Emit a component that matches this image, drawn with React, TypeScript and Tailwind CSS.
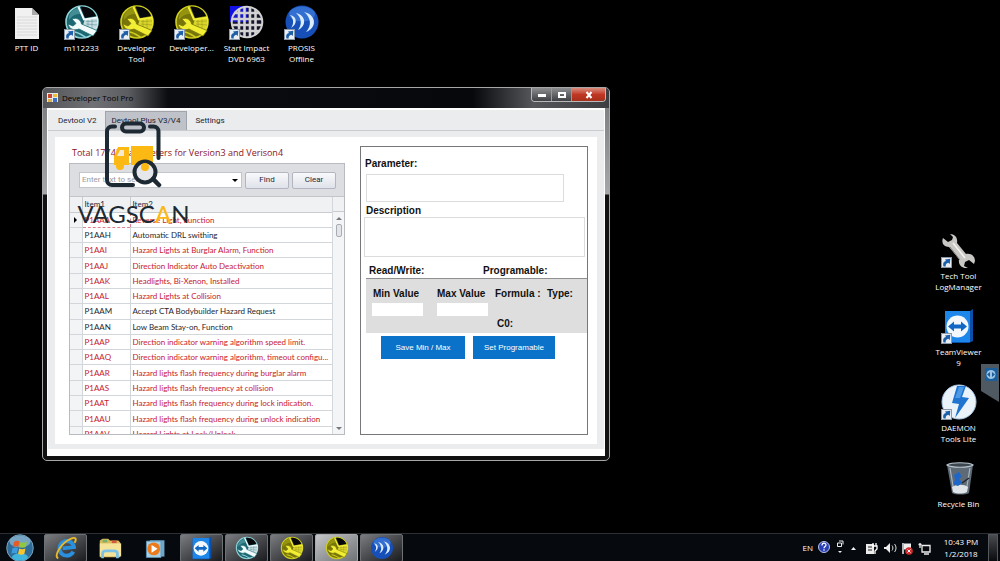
import React from "react";

type IconProps = { className?: string };

const parameters = [
  { code: "P1AAA", name: "Reverse Light, Function", changed: true },
  { code: "P1AAH", name: "Automatic DRL swithing", changed: false },
  { code: "P1AAI", name: "Hazard Lights at Burglar Alarm, Function", changed: true },
  { code: "P1AAJ", name: "Direction Indicator Auto Deactivation", changed: true },
  { code: "P1AAK", name: "Headlights, Bi-Xenon, Installed", changed: true },
  { code: "P1AAL", name: "Hazard Lights at Collision", changed: true },
  { code: "P1AAM", name: "Accept CTA Bodybuilder Hazard Request", changed: false },
  { code: "P1AAN", name: "Low Beam Stay-on, Function", changed: false },
  { code: "P1AAP", name: "Direction indicator warning algorithm speed limit.", changed: true },
  { code: "P1AAQ", name: "Direction indicator warning algorithm, timeout configu...", changed: true },
  { code: "P1AAR", name: "Hazard lights flash frequency during burglar alarm", changed: true },
  { code: "P1AAS", name: "Hazard lights flash frequency at collision", changed: true },
  { code: "P1AAT", name: "Hazard lights flash frequency during lock indication.", changed: true },
  { code: "P1AAU", name: "Hazard lights flash frequency during unlock indication", changed: true },
  { code: "P1AAV", name: "Hazard Lights at Lock/Unlock", changed: true },
];

/* ---------- icons ---------- */

const PaperIcon = ({ className }: IconProps) => (
  <svg viewBox="0 0 36 36" className={className} aria-hidden="true">
    <path d="M6 4h17l7 7v24H6z" fill="#f1f1f1" />
    <path d="M23 4v7h7z" fill="#a9a9a9" />
    <path d="M8 13h20M8 16h20M8 19h20M8 22h20M8 25h20M8 28h20M8 31h20" stroke="#d9d9d9" strokeWidth="1" />
  </svg>
);

const ToolDisc = ({ className, rim, face, dark }: IconProps & { rim: string; face: string; dark: string }) => (
  <svg viewBox="0 0 36 36" className={className} aria-hidden="true">
    <circle cx="18" cy="18" r="16" fill={dark} stroke={rim} strokeWidth="1.6" />
    <path d="M5 12C7 7 10 5 14 4l2 6C11 10 8 12 5 16z" fill={rim} opacity=".35" />
    <path d="M16.500 2.500C24 2 30 6 32 12l-11 2z" fill="#07080b" />
    <path d="M21 15l13-1c.5 6-.5 9-3 13l-12-6z" fill={face} opacity=".8" />
    <path d="M22 17.500l11-.5M22 20l11 1M24 15v8M28 15v9" stroke={dark} strokeWidth=".5" opacity=".7" />
    <path d="M14.500 3L20 15.500 33.500 13.500" fill="none" stroke={face} strokeWidth="2" />
    <path
      d="M8 15c5-2 9 1 9.500 5L33 26.500 29 32l-14-7c-5 2-10 0-11-5l5 2 3-2.500z"
      fill={face}
      stroke={dark}
      strokeWidth=".8"
    />
    <path d="M10 28c4 0 8 3 12 5.500" stroke={rim} strokeWidth="1.600" fill="none" />
  </svg>
);

const TealTool = ({ className }: IconProps) => (
  <ToolDisc className={className} rim="#8ed3d8" face="#f2fbfb" dark="#1c6772" />
);

const YellowTool = ({ className }: IconProps) => (
  <ToolDisc className={className} rim="#cfcf1e" face="#f2ee34" dark="#77750a" />
);

const GlobeGrid = ({ className }: IconProps) => (
  <svg viewBox="0 0 36 36" className={className} aria-hidden="true">
    <path d="M1 2h18v16H1z" fill="#1212e8" />
    <circle cx="18" cy="18" r="16" fill="#14142a" />
    <path d="M3 13A16 16 0 0 1 18 2v16H2z" fill="#1a1ac8" />
    <g stroke="#d2d2d2" strokeWidth="2.600" fill="none">
      <path d="M10 5v26M15.500 3v30M21 3v30M26.500 5v26M5 9h26M3 15h30M3 21h30M5 27h26" />
      <circle cx="18" cy="18" r="15.300" strokeWidth="2" />
    </g>
  </svg>
);

const Prosis = ({ className }: IconProps) => (
  <svg viewBox="0 0 36 36" className={className} aria-hidden="true">
    <circle cx="18" cy="18" r="16.500" fill="#174fb8" />
    <ellipse cx="18" cy="10" rx="13" ry="7.500" fill="#4b8be6" opacity=".55" />
    <g fill="#dcecff">
      <path d="M6 11c7 1 8 9 1 13 3-4 3-9-1-13z" />
      <path d="M12 9c10 2 11 13 2 17 4-5 4-12-2-17z" />
      <path d="M20 8c13 3 13 16 2 20 6-6 5-15-2-20z" />
    </g>
  </svg>
);

const WrenchIcon = ({ className }: IconProps) => (
  <svg viewBox="0 0 36 36" className={className} aria-hidden="true">
    <path
      d="M9 2c5 0 8 4 7 9l9 11c5-1 9 2 9 7l-1 3-5-4-4 2-1 4 4 2c-6 1-10-3-9-9L8 15c-5 0-8-4-6-9l5 4 4-2 1-3z"
      fill="#c9c7c4"
    />
    <path d="M12 11l12 15" stroke="#f4f2ef" strokeWidth="1.600" />
    <path d="M9 15l10 13" stroke="#85827e" strokeWidth="1" />
  </svg>
);

const TeamViewer = ({ className }: IconProps) => (
  <svg viewBox="0 0 36 36" className={className} aria-hidden="true">
    <path d="M4 3h25l3-2v32l-4 2H4z" fill="#0b4fa8" />
    <path d="M4 3h25v31H4z" fill="#1c86ea" />
    <circle cx="16.500" cy="18.500" r="11" fill="#f3f8fd" />
    <path d="M7 18.500l6-5v3h7v-3l6 5-6 5v-3h-7v3z" fill="#1268c3" />
  </svg>
);

const Daemon = ({ className }: IconProps) => (
  <svg viewBox="0 0 36 36" className={className} aria-hidden="true">
    <circle cx="18" cy="18" r="17" fill="#eaf2fa" stroke="#a9c9e8" strokeWidth="1" />
    <path d="M16 2h9l-4 11 7 1-14 20 4-14-7-1z" fill="#1f74d0" />
    <path d="M18 3h5l-4 11h-5z" fill="#4e9ae4" />
  </svg>
);

const RecycleBin = ({ className }: IconProps) => (
  <svg viewBox="0 0 36 36" className={className} aria-hidden="true">
    <path d="M6 5h26l-4 28c-3 2-14 2-17 0z" fill="#5e6b77" />
    <path d="M6 5c4-3 22-3 26 0-4 3-22 3-26 0z" fill="#3d4750" stroke="#bcc6ce" strokeWidth="1.200" />
    <path d="M9 8l4 24M29 8l-4 24" stroke="#a9b5c0" strokeWidth="1.200" />
    <path d="M11 27c5-3 12-3 16 0l-1 5c-4 2-10 2-14 0z" fill="#dfe4e8" />
    <path d="M13 15l5-3 3 5-3 1 3 5-4 3-5-2 2-4z" fill="#1f66c9" />
    <path d="M21 23l7-5" stroke="#20262c" strokeWidth="1.500" />
  </svg>
);

const ShortcutArrow = () => (
  <svg viewBox="0 0 11 11" className="absolute bottom-0 left-0 h-[11px] w-[11px]" aria-hidden="true">
    <rect x=".5" y=".5" width="10" height="10" fill="#e9eef4" stroke="#8c98a6" />
    <path d="M2.500 9.500C1.500 6 3 4.300 5 4L4 2.500 9.300 1.800 8.800 7 7.300 5.700C5.500 6 4.300 7.500 4.700 9.500z" fill="#1d5fa8" />
  </svg>
);

const StartOrb = () => (
  <svg viewBox="0 0 28 28" className="h-7 w-7" aria-hidden="true">
    <circle cx="14" cy="14" r="13.300" fill="#2f6c99" stroke="#8fb6cc" strokeWidth=".8" />
    <ellipse cx="14" cy="7.500" rx="10.500" ry="6" fill="#9cc3d8" opacity=".65" />
    <ellipse cx="14" cy="23" rx="8" ry="3.500" fill="#44c8ee" opacity=".8" />
    <path d="M8 8c2-1.500 4-1.500 5.500-.5L12.300 13c-2-1-3.500-1-5.500 0z" fill="#e65a28" />
    <path d="M14.500 8c2 1 4 1 6.500-.5l-1.200 5.500c-2 1-4 1-6.500 0z" fill="#8fc73e" />
    <path d="M6.500 14.300c2-1 3.500-1 5.500 0l-1.200 5.500c-2-1-3.500-1-5.500 0z" fill="#3d9be0" />
    <path d="M13.200 14.500c2 1 4 1 6.300 0l-1.200 5.500c-2 1-4 1-6.300 0z" fill="#f7c62f" />
  </svg>
);

const ExplorerE = ({ className }: IconProps) => (
  <svg viewBox="0 0 28 28" className={className} aria-hidden="true">
    <path
      d="M22 19a8.500 8.500 0 1 1 1.300-5H10"
      fill="none"
      stroke="#2a8fdd"
      strokeWidth="4.500"
      transform="rotate(-6 14 14)"
    />
    <path d="M5 26C-1 24 8 8 20 3c5-2 7 0 4 5" fill="none" stroke="#e8b92b" strokeWidth="2.200" />
  </svg>
);

const FolderIcon = ({ className }: IconProps) => (
  <svg viewBox="0 0 28 28" className={className} aria-hidden="true">
    <path d="M3 6l3-2h6l2 2h9l2 2v16H3z" fill="#d9bb5c" />
    <path d="M6 5h5v3H6z" fill="#7bb267" />
    <path d="M16 6h5v3h-5z" fill="#d8563d" />
    <path d="M3 9h23v14H3z" fill="#f5e39a" />
    <path d="M6 25v-5c0-2 2-3 4-3h8c2 0 4 1 4 3v5" fill="none" stroke="#7cc2e6" strokeWidth="3" />
  </svg>
);

const MediaIcon = ({ className }: IconProps) => (
  <svg viewBox="0 0 28 28" className={className} aria-hidden="true">
    <path d="M8 5h17v19H8z" fill="#6ea9cc" />
    <path d="M4 6h17v19H4z" fill="#a8cfe4" stroke="#5f97b8" />
    <circle cx="12.500" cy="15" r="7.500" fill="#ea7a1c" />
    <path d="M10 10.500l7 4.500-7 4.500z" fill="#fff" />
  </svg>
);

const FormIcon = () => (
  <svg viewBox="0 0 11 11" className="h-[11px] w-[11px]" aria-hidden="true">
    <path d="M0 1h11v9H0z" fill="#e8e8e8" />
    <path d="M1 2h4v4H1z" fill="#c9452c" />
    <path d="M6 2h4v3H6z" fill="#f0bd3a" />
    <path d="M1 7h4v3H1z" fill="#d9b04c" />
    <path d="M6 6h4v4H6z" fill="#3f6fc4" />
  </svg>
);

const ClipboardTruck = () => (
  <svg viewBox="104 120 60 68" className="h-[68px] w-[60px]" aria-hidden="true">
    <g fill="none" stroke="#1d2a33" strokeWidth="4" strokeLinecap="round">
      <path d="M115 126.500h-3a5 5 0 0 0-5 5V180a5 5 0 0 0 5 5h21" />
      <path d="M150 126.500h3.500a5 5 0 0 1 5 5V158" />
      <rect x="122" y="123.500" width="22" height="8" rx="4" />
    </g>
    <path d="M131 146h22v19h-22z" fill="#fcb813" />
    <path d="M129 165h-15v-9l4-9h11z" fill="#fcb813" />
    <path d="M117 156l3-6h4v6z" fill="#f5ead0" />
    <circle cx="120" cy="166" r="4" fill="#fcb813" />
    <circle cx="145" cy="172" r="10.500" fill="#e6e7ea" stroke="#1d2a33" strokeWidth="4" />
    <circle cx="145" cy="167" r="4" fill="#fcb813" />
    <path d="M153 179l6 6" stroke="#1d2a33" strokeWidth="4.500" strokeLinecap="round" />
  </svg>
);

/* ---------- desktop ---------- */

const DesktopIcon = ({ icon, label, shortcut = true }: { icon: React.ReactNode; label: string; shortcut?: boolean }) => (
  <a
    href="#"
    className="flex h-[76px] w-[55px] flex-col items-center gap-[2px] px-[3px] text-center font-['Open_Sans',sans-serif] text-[8px] leading-[11px] text-white"
  >
    <span className="relative block h-9 w-9 shrink-0">
      {icon}
      {shortcut && <ShortcutArrow />}
    </span>
    <span>{label}</span>
  </a>
);

const iconSize = "h-9 w-9";

const TopIcons = () => (
  <div className="absolute -left-px top-1 flex">
    <DesktopIcon icon={<PaperIcon className={iconSize} />} label="PTT ID" shortcut={false} />
    <DesktopIcon icon={<TealTool className={iconSize} />} label="m112233" />
    <DesktopIcon icon={<YellowTool className={iconSize} />} label="Developer Tool" />
    <DesktopIcon icon={<YellowTool className={iconSize} />} label="Developer..." />
    <DesktopIcon icon={<GlobeGrid className={iconSize} />} label="Start Impact DVD 6963" />
    <DesktopIcon icon={<Prosis className={iconSize} />} label="PROSIS Offline" />
  </div>
);

const SideIcons = () => (
  <div className="absolute right-[14px] top-[232px] flex flex-col">
    <DesktopIcon icon={<WrenchIcon className={iconSize} />} label="Tech Tool LogManager" />
    <DesktopIcon icon={<TeamViewer className={iconSize} />} label="TeamViewer 9" />
    <DesktopIcon icon={<Daemon className={iconSize} />} label="DAEMON Tools Lite" />
    <DesktopIcon icon={<RecycleBin className={iconSize} />} label="Recycle Bin" shortcut={false} />
  </div>
);

const SideHandle = () => (
  <div className="absolute right-0 top-[364px]">
    <svg viewBox="0 0 19 38" className="h-[38px] w-[19px]" aria-hidden="true">
      <path d="M0 0h18v38L0 27z" fill="#4f5962" />
      <rect x="4" y="4" width="12" height="13" fill="#1a5f9c" />
      <circle cx="10" cy="10.500" r="4.500" fill="#9cc4e4" />
      <path d="M6 10.500l3-2.500v5zM14 10.500L11 8v5z" fill="#1a5f9c" />
    </svg>
  </div>
);

/* ---------- window ---------- */

const TitleBar = () => (
  <header className="flex h-5 items-start justify-between rounded-t-[4px] bg-[linear-gradient(90deg,#55565a_0px,#707174_50px,#5c5d61_85px,#0a0c10_125px,#06080c_430px,#55575a_490px,#3c3e41_100%)]">
    <div className="flex h-[19px] items-center gap-1 pl-1 font-['Open_Sans',sans-serif] text-[8px] text-black">
      <FormIcon />
      <h1>Developer Tool Pro</h1>
    </div>
    <div className="mr-[3px] flex h-[14px] overflow-hidden rounded-b-[4px] border border-t-0 border-[#b9b9b9]">
      <button aria-label="Minimize" className="flex w-5 items-end justify-center border-r border-[#999] bg-gradient-to-b from-[#8d8e90] to-[#3f4144] pb-[4px]">
        <span className="h-[3px] w-[8px] bg-white" />
      </button>
      <button aria-label="Maximize" className="flex w-5 items-center justify-center border-r border-[#999] bg-gradient-to-b from-[#8d8e90] to-[#3f4144]">
        <span className="h-[6px] w-[8px] border-2 border-white" />
      </button>
      <button aria-label="Close" className="flex w-[33px] items-center justify-center bg-gradient-to-b from-[#d98a7c] via-[#bf3723] to-[#a8301c]">
        <svg viewBox="0 0 8 8" className="h-2 w-2" aria-hidden="true">
          <path d="M1.500 1l5 6M6.500 1l-5 6" stroke="#fff" strokeWidth="2" />
        </svg>
      </button>
    </div>
  </header>
);

const Tabs = () => (
  <nav className="flex h-[21px] shrink-0 items-end border-b border-[#c9cbd0] pl-[2px] text-[8px] text-[#222433]">
    <button className="h-[18px] px-2">Devtool V2</button>
    <button className="h-[19px] border border-b-0 border-[#a2a4ab] bg-[#c0c2c9] px-[6px]">Devtool Plus V3/V4</button>
    <button className="h-[18px] px-2">Settings</button>
  </nav>
);

const SearchBar = () => (
  <div className="flex h-[33px] shrink-0 items-center gap-[3px] border-b border-[#c3c5c9] bg-[#dcdee1] pl-[9px] text-[8px] text-[#26283a]">
    <div className="flex h-4 w-[163px] items-center border border-[#c2c5ca] bg-white">
      <input
        aria-label="Search"
        placeholder="Enter text to search..."
        className="min-w-0 flex-1 bg-transparent px-[2px] placeholder:text-[#9a9a9f]"
      />
      <button aria-label="Show history" className="flex w-3 justify-center">
        <span className="border-x-[3px] border-t-[3px] border-x-transparent border-t-black" />
      </button>
    </div>
    <button className="h-[17px] w-11 rounded-[2px] border border-[#b3b6c0] bg-gradient-to-b from-[#f8f9fb] to-[#dfe2ea]">Find</button>
    <button className="h-[17px] w-11 rounded-[2px] border border-[#b3b6c0] bg-gradient-to-b from-[#f8f9fb] to-[#dfe2ea]">Clear</button>
  </div>
);

const ParameterTable = () => (
  <div className="flex h-[237px] overflow-hidden bg-white">
    <table className="h-[245px] flex-1 table-fixed border-collapse font-['Lato',sans-serif] text-[8px] leading-[10px]">
      <colgroup>
        <col className="w-3" />
        <col className="w-12" />
        <col />
      </colgroup>
      <thead>
        <tr className="h-[15px] bg-[#f0f1f3] text-left text-[#26283a]">
          <th className="border-b border-r border-[#c9cbd0] p-0" />
          <th className="border-b border-r border-[#c9cbd0] px-[2px] py-0 font-normal">Item1</th>
          <th className="border-b border-[#c9cbd0] px-[2px] py-0 font-normal">Item2</th>
        </tr>
      </thead>
      <tbody>
        {parameters.map((row, i) => (
          <tr key={row.code} className={row.changed ? "text-[#c8202c]" : "text-[#26262c]"}>
            <td className="border-b border-r border-[#d3d6da] bg-[#f3f4f6] p-0">
              {i === 0 && (
                <span className="ml-1 block w-0 border-y-[3px] border-l-[3px] border-y-transparent border-l-black" />
              )}
            </td>
            <td
              className={
                i === 0
                  ? "border border-dashed border-[#e08088] px-[2px] py-0"
                  : "border-b border-r border-[#d3d6da] px-[2px] py-0"
              }
            >
              {row.code}
            </td>
            <td className="overflow-hidden whitespace-nowrap border-b border-[#d3d6da] px-[2px] py-0">{row.name}</td>
          </tr>
        ))}
      </tbody>
    </table>
    <div className="flex w-3 flex-col items-center border-l border-[#d3d6da] bg-[#f4f5f7]">
      <span className="h-[15px] w-full shrink-0 border-b border-[#c9cbd0] bg-[#f0f1f3]" />
      <span className="mt-[5px] border-x-[3px] border-b-[3px] border-x-transparent border-b-[#77797f]" />
      <span className="mt-1 h-[13px] w-[6px] rounded-[2px] border border-[#a9acb3] bg-[#e3e5e9]" />
      <span className="mb-1 mt-auto border-x-[3px] border-t-[3px] border-x-transparent border-t-[#77797f]" />
    </div>
  </div>
);

const DetailPanel = () => (
  <section className="flex w-[228px] shrink-0 flex-col border border-[#76777a] pt-3 font-['Liberation_Sans',sans-serif] text-[10px] font-bold leading-[10px] text-[#111]">
    <label htmlFor="parameter" className="pl-1">
      Parameter:
    </label>
    <input id="parameter" className="ml-[5px] mt-[5px] h-7 w-[198px] border border-[#dcdcdc] bg-white" />
    <label htmlFor="description" className="mt-1 pl-[5px]">
      Description
    </label>
    <textarea id="description" className="ml-[3px] mr-[2px] mt-[1px] h-10 resize-none border border-[#dcdcdc] bg-white" />
    <div className="mt-[9px] flex pl-2">
      <span className="w-[114px]">Read/Write:</span>
      <span>Programable:</span>
    </div>
    <div className="ml-[5px] mt-[2px] flex h-[55px] border-t border-[#8f8f92] bg-[#dedede] pl-[6px] pt-[10px]">
      <div className="flex w-[65px] flex-col gap-1">
        <label htmlFor="min-value" className="pl-[1px]">Min Value</label>
        <input id="min-value" className="h-[13px] w-[51px] bg-white" />
      </div>
      <div className="flex w-[58px] flex-col gap-1">
        <label htmlFor="max-value">Max Value</label>
        <input id="max-value" className="h-[13px] w-[51px] bg-white" />
      </div>
      <div className="flex w-[52px] flex-col gap-5">
        <span>Formula :</span>
        <span className="pl-[2px]">C0:</span>
      </div>
      <span>Type:</span>
    </div>
    <div className="mt-[3px] flex gap-2 pl-5 text-[8px] font-normal text-white">
      <button className="h-[23px] w-[84px] bg-[#0a72c8]">Save Min / Max</button>
      <button className="h-[23px] w-[82px] bg-[#0a72c8]">Set Programable</button>
    </div>
  </section>
);

const AppWindow = () => (
  <main className="absolute left-[42px] top-[87px] flex w-[568px] flex-col rounded-[5px] border border-[#a5a7a9] bg-[linear-gradient(180deg,#77787a_0px,#a6a7a9_106px,#111_107px,#111_100%)]">
    <TitleBar />
    <div className="mx-1 mb-1 flex flex-col border border-b-[7px] border-t-2 border-white bg-[#ebecee] font-['Roboto',sans-serif]">
      <Tabs />
      <div className="mx-[7px] mb-[5px] mt-[6px] flex justify-between bg-white pb-[9px] pl-[14px] pr-[9px] pt-[9px]">
        <section className="flex w-[276px] flex-col pt-[2px]">
          <h2 className="h-[15px] whitespace-nowrap pl-[3px] font-['Open_Sans',sans-serif] text-[9px] leading-[10px] text-[#8c1423]">
            Total 17742 parameters for Version3 and Verison4
          </h2>
          <div className="border border-[#b9bbc0]">
            <SearchBar />
            <ParameterTable />
          </div>
        </section>
        <DetailPanel />
      </div>
    </div>
  </main>
);

const Watermark = () => (
  <div className="pointer-events-none absolute left-[77px] top-[120px] flex w-[113px] flex-col items-center">
    <ClipboardTruck />
    <p className="mt-[14px] whitespace-nowrap font-['Lato',sans-serif] text-[24px] leading-6 text-[#1d2a33]">
      VAGSC<span className="text-[#fcb813]">A</span>N
    </p>
  </div>
);

/* ---------- taskbar ---------- */

const TaskButton = ({ label, active, children }: { label: string; active?: boolean; children: React.ReactNode }) => (
  <button
    aria-label={label}
    className={
      active
        ? "flex h-7 w-[43px] items-center justify-center rounded-[2px] border border-[#a8aaac] bg-gradient-to-br from-[#c4c6c8] to-[#6f7275]"
        : "flex h-7 w-[43px] items-center justify-center rounded-[2px] border border-[#6e7174] bg-gradient-to-br from-[#7b7d80] to-[#1a1c20]"
    }
  >
    {children}
  </button>
);

const Tray = () => (
  <div className="flex items-center font-['Open_Sans',sans-serif] text-[8px] text-white">
    <span>EN</span>
    <svg viewBox="0 0 116 28" className="ml-1 h-7 w-[116px]" aria-hidden="true">
      <circle cx="7" cy="13" r="5.500" fill="#2a3fb4" stroke="#b7c2ee" />
      <path d="M5 11.500c0-3 4-3 4-.5 0 1.500-2 1.500-2 3.200M7 15.200v1.500" stroke="#fff" fill="none" strokeWidth="1.200" />
      <path d="M20.500 9h4v3.500h-4zM22 7h4v3.500" stroke="#eee" fill="none" />
      <path d="M21 17h4l-2 2zM34 16l2.500-3 2.500 3z" fill="#eee" />
      <path d="M49 10h8v10h-8z" fill="#ececec" />
      <path d="M51 13h4M51 16h4" stroke="#222" />
      <path d="M56 9v3M59 9v3M55 12h5v3l-2 2v3" stroke="#fff" fill="none" strokeWidth="1.300" />
      <path d="M67 13h2l4-4v10l-4-4h-2z" fill="#eee" />
      <path d="M75 11.500c1.200 1.500 1.200 3.500 0 5M77.500 10c2 2.500 2 5.500 0 8" stroke="#ddd" fill="none" />
      <path d="M86 9v11" stroke="#eee" strokeWidth="1.500" />
      <path d="M87 9.500h7v6h-7z" fill="#eee" />
      <circle cx="92" cy="17" r="3.800" fill="#d42a2a" />
      <path d="M90.500 15.500l3 3M93.500 15.500l-3 3" stroke="#fff" />
      <path d="M105 11.500h8v6.500h-8zM107 20h5M103 9v5M101.500 10.500h3" stroke="#eee" fill="none" strokeWidth="1.300" />
    </svg>
    <time className="ml-[2px] flex w-[52px] flex-col text-center leading-[12px]">
      <span>10:43 PM</span>
      <span>1/2/2018</span>
    </time>
    <button aria-label="Show desktop" className="mr-[2px] ml-[1px] h-7 w-[10px] border border-[#55585b] bg-gradient-to-b from-[#4a4c50] to-[#0b0c0f]" />
  </div>
);

const Taskbar = () => (
  <footer className="flex h-7 items-center justify-between border-t border-[#2c2f33] bg-[#06090e]">
    <div className="flex items-center">
      <button aria-label="Start" className="ml-[6px] mr-[10px]">
        <StartOrb />
      </button>
      <TaskButton label="Internet Explorer">
        <ExplorerE className="h-6 w-6" />
      </TaskButton>
      <button aria-label="Explorer" className="flex w-[46px] justify-center">
        <FolderIcon className="h-[26px] w-[26px]" />
      </button>
      <button aria-label="Media Player" className="mr-1 flex w-[43px] justify-center">
        <MediaIcon className="h-6 w-6" />
      </button>
      <div className="flex gap-[2px]">
        <TaskButton label="TeamViewer">
          <TeamViewer className="h-6 w-6" />
        </TaskButton>
        <TaskButton label="m112233">
          <TealTool className="h-6 w-6" />
        </TaskButton>
        <TaskButton label="Developer Tool">
          <YellowTool className="h-6 w-6" />
        </TaskButton>
        <TaskButton label="Developer Tool Pro" active>
          <YellowTool className="h-6 w-6" />
        </TaskButton>
        <TaskButton label="PROSIS">
          <Prosis className="h-6 w-6" />
        </TaskButton>
      </div>
    </div>
    <Tray />
  </footer>
);

const App = () => {
  return (
    <div className="relative flex min-h-screen flex-col justify-end overflow-hidden bg-black">
      <TopIcons />
      <SideIcons />
      <SideHandle />
      <AppWindow />
      <Watermark />
      <Taskbar />
    </div>
  );
};

export default App;
